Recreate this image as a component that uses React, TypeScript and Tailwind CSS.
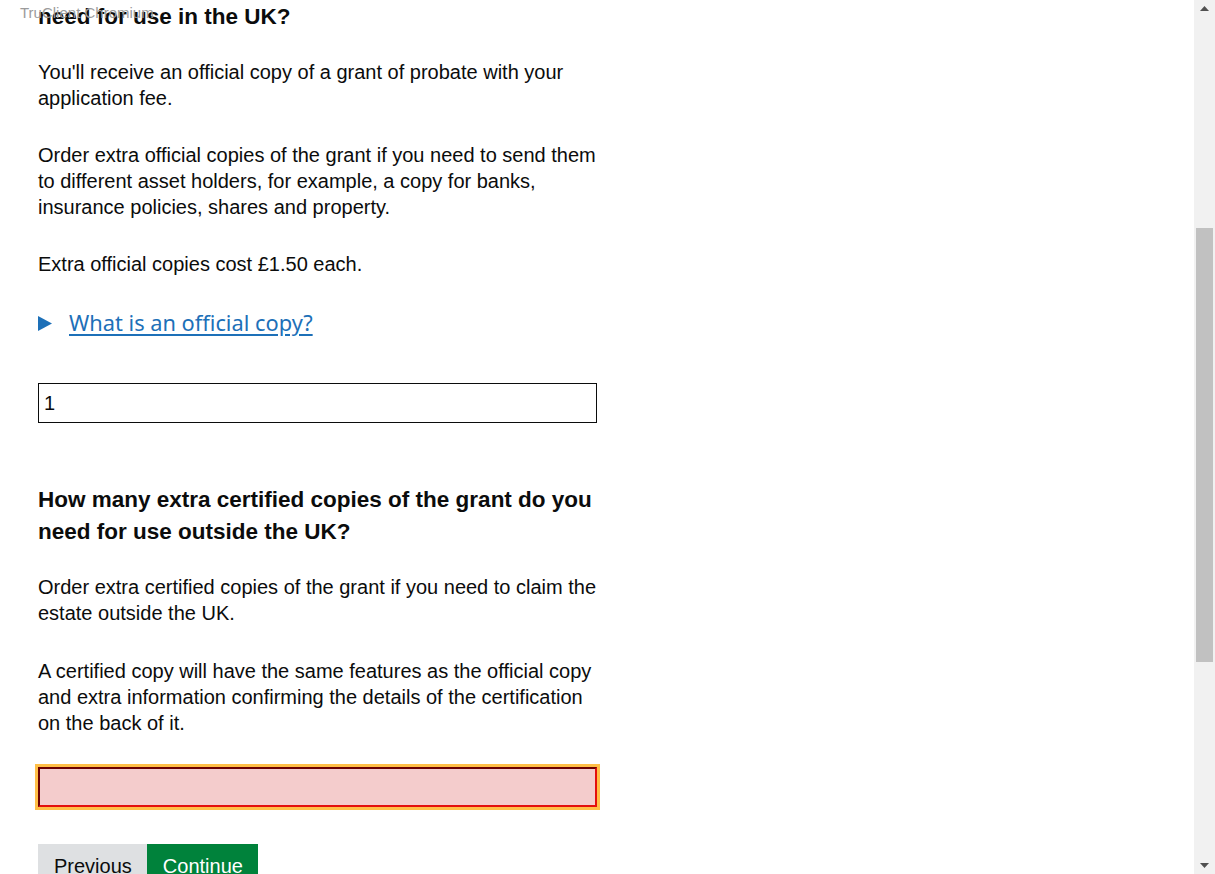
import React from 'react'

const body = "font-['Liberation_Sans',Arial,sans-serif] text-[20px] leading-[26px] text-[#0b0c0c]"
const heading = "font-['Liberation_Sans',Arial,sans-serif] text-[22.5px] font-bold leading-[32px] text-[#0b0c0c]"

export default function App() {
  return (
    <div className="relative flex h-[874px] w-[1215px] overflow-hidden bg-white">
      <span className="absolute left-[20px] top-[4px] font-['Liberation_Sans',Arial,sans-serif] text-[15px] leading-[18px] text-[#9b9b9b]">
        TruClient Chromium
      </span>

      <main className="flex-1 pl-[38px]">
        <div className="w-[560px]">
          <h1 className={`${heading} mt-[1px] mb-[26px]`}>need for use in the UK?</h1>

          <p className={`${body} mb-[31px]`}>
            You'll receive an official copy of a grant of probate with your application fee.
          </p>
          <p className={`${body} mb-[31px]`}>
            Order extra official copies of the grant if you need to send them to different asset holders, for example, a copy for banks, insurance policies, shares and property.
          </p>
          <p className={body}>Extra official copies cost £1.50 each.</p>

          <div className="mt-[33px] flex items-center gap-[17px] leading-[26px]">
            <svg width="14" height="15" viewBox="0 0 14 15" className="shrink-0">
              <path d="M0 0 L14 7.5 L0 15 Z" fill="#1d70b8" />
            </svg>
            <a href="#" className="font-['Noto_Sans',sans-serif] text-[21.8px] text-[#1d70b8] underline underline-offset-[3px]">
              What is an official copy?
            </a>
          </div>

          <input
            defaultValue="1"
            className="mt-[47px] block h-[40px] w-[559px] border border-[#0b0c0c] px-[5px] font-['Liberation_Sans',Arial,sans-serif] text-[20px] text-[#0b0c0c] outline-none"
          />

          <h2 className={`${heading} mt-[61px] mb-[26px]`}>
            How many extra certified copies of the grant do you need for use outside the UK?
          </h2>

          <p className={`${body} mb-[32px]`}>
            Order extra certified copies of the grant if you need to claim the estate outside the UK.
          </p>
          <p className={body}>
            A certified copy will have the same features as the official copy and extra information confirming the details of the certification on the back of it.
          </p>

          <input
            className="mt-[31px] block h-[40px] w-[559px] border-2 border-l-[#6b0000] border-t-[#6b0000] border-r-[#e3100e] border-b-[#e3100e] bg-[#f4cccc] px-[5px] outline outline-[3px] outline-[#ffbf47]"
          />

          <div className="mt-[37px] flex">
            <button className="bg-[#dee0e2] pl-[16px] pr-[15px] pt-[9px] pb-[10px] font-['Liberation_Sans',Arial,sans-serif] text-[20px] leading-[26px] text-[#0b0c0c]">
              Previous
            </button>
            <button className="bg-[#00823b] pl-[16px] pr-[15px] pt-[9px] pb-[10px] font-['Liberation_Sans',Arial,sans-serif] text-[20px] leading-[26px] text-white">
              Continue
            </button>
          </div>
        </div>
      </main>

      <div className="flex h-full w-[21px] shrink-0 flex-col items-center bg-[#f1f1f1]">
        <div className="flex h-[17px] w-full items-center justify-center">
          <svg width="9" height="5" viewBox="0 0 9 5"><path d="M0 5 L4.5 0 L9 5 Z" fill="#505050" /></svg>
        </div>
        <div className="mt-[211px] h-[434px] w-[17px] bg-[#c1c1c1]" />
        <div className="flex-1" />
        <div className="flex h-[17px] w-full items-center justify-center">
          <svg width="9" height="5" viewBox="0 0 9 5"><path d="M0 0 L9 0 L4.5 5 Z" fill="#505050" /></svg>
        </div>
      </div>
    </div>
  )
}
